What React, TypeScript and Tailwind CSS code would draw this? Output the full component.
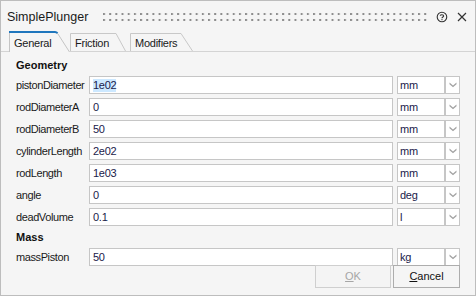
import React from "react";

const FONT = { fontFamily: '"Liberation Sans", Arial, sans-serif' };

function Chevron() {
  return (
    <svg width="8" height="6" viewBox="0 0 8 6">
      <path d="M0.5 0.5 L4 3.5 L7.5 0.5 L7.5 2.2 L4 5.3 L0.5 2.2 Z" fill="#a3a3a3" />
    </svg>
  );
}

function Row({ label, value, unit, selected }: { label: string; value: string; unit: string; selected?: boolean }) {
  return (
    <div className="flex h-[18px] items-center">
      <div className="w-[73px] text-[11px] tracking-[-0.4px] text-[#1a1a1a] leading-none">{label}</div>
      <div className="w-[304px] h-[18px] border border-[#c6c6c6] bg-white flex items-center pl-[3px] text-[11px] tracking-[-0.25px] text-[#1a1a4a] leading-none">
        {selected ? <span className="bg-[#cce8ff] py-[1px]">{value}</span> : <span>{value}</span>}
      </div>
      <div className="ml-[4px] w-[48px] h-[18px] border border-[#c6c6c6] bg-white flex items-center pl-[2px] text-[11px] tracking-[-0.25px] text-[#1a1a4a] leading-none">
        {unit}
      </div>
      <div className="w-[15px] h-[18px] border border-[#c6c6c6] bg-white flex items-center justify-center">
        <Chevron />
      </div>
    </div>
  );
}

function Heading({ children }: { children: React.ReactNode }) {
  return <div className="h-[22px] flex items-center text-[11px] font-bold text-[#111] leading-none">{children}</div>;
}

export default function App() {
  return (
    <div style={FONT} className="w-[476px] h-[296px] border border-[#bdbdbd] bg-[#f5f5f5] flex flex-col overflow-hidden">
      {/* title bar */}
      <div className="h-[30px] flex items-center pl-[6px] pr-[8px]">
        <span className="text-[12.5px] text-[#1a1a1a] leading-none mt-[2px]">SimplePlunger</span>
        <svg className="ml-[15px] mt-[2px]" width="328" height="8" viewBox="0 0 328 8">
          <defs>
            <pattern id="dots" x="0" y="0" width="6.2" height="6" patternUnits="userSpaceOnUse">
              <rect x="0" y="0" width="2" height="2" fill="#8c8c8c" />
            </pattern>
          </defs>
          <rect x="0" y="0" width="328" height="8" fill="url(#dots)" />
        </svg>
        <svg className="ml-[6px] mt-[1px]" width="12" height="12" viewBox="0 0 12 12">
          <circle cx="6" cy="6" r="4.8" fill="none" stroke="#333" strokeWidth="1.1" />
          <path d="M4.3 4.8 C4.3 3.4 7.7 3.4 7.7 4.9 C7.7 6 6 6 6 7.3" fill="none" stroke="#333" strokeWidth="1.1" />
          <rect x="5.45" y="8.1" width="1.1" height="1.1" fill="#333" />
        </svg>
        <svg className="ml-[9px] mt-[1px]" width="10" height="10" viewBox="0 0 10 10">
          <path d="M1 1 L9 9 M9 1 L1 9" stroke="#333" strokeWidth="1.2" />
        </svg>
      </div>

      {/* tabs */}
      <div className="h-[21px] border-b border-[#d4d4d4] flex items-end pl-[8px]">
        <div className="relative w-[61px] h-[21px] -mb-px bg-[#f5f5f5]">
          <svg className="absolute inset-0" width="61" height="21" viewBox="0 0 61 21">
            <path d="M0.5 21 V1.5" stroke="#c4c4c4" />
            <path d="M46 1.2 Q48 1.5 49 3 L60.5 21" fill="none" stroke="#c4c4c4" />
            <path d="M0 1 H46 Q47.5 1 48.5 2.2" fill="none" stroke="#1f76bd" strokeWidth="2" />
          </svg>
          <span className="absolute left-[5px] top-[7px] text-[11px] tracking-[-0.25px] text-[#1a1a1a] leading-none">General</span>
        </div>
        <div className="relative w-[56px] h-[18px]">
          <svg className="absolute inset-0" width="56" height="18" viewBox="0 0 56 18">
            <path d="M0.5 18 V0.5 H46 L55.5 18" fill="none" stroke="#c8c8c8" />
          </svg>
          <span className="absolute left-[5px] top-[5px] text-[11px] tracking-[-0.25px] text-[#1a1a1a] leading-none">Friction</span>
        </div>
        <div className="relative ml-[4px] w-[63px] h-[18px]">
          <svg className="absolute inset-0" width="63" height="18" viewBox="0 0 63 18">
            <path d="M0.5 18 V0.5 H51 L62.5 18" fill="none" stroke="#c8c8c8" />
          </svg>
          <span className="absolute left-[5px] top-[5px] text-[11px] tracking-[-0.25px] text-[#1a1a1a] leading-none">Modifiers</span>
        </div>
      </div>

      {/* content */}
      <div className="pl-[15px] mt-[2px] flex flex-col">
        <Heading>Geometry</Heading>
        <div className="flex flex-col gap-[4px]">
          <Row label="pistonDiameter" value="1e02" unit="mm" selected />
          <Row label="rodDiameterA" value="0" unit="mm" />
          <Row label="rodDiameterB" value="50" unit="mm" />
          <Row label="cylinderLength" value="2e02" unit="mm" />
          <Row label="rodLength" value="1e03" unit="mm" />
          <Row label="angle" value="0" unit="deg" />
          <Row label="deadVolume" value="0.1" unit="l" />
        </div>
        <Heading>Mass</Heading>
        <Row label="massPiston" value="50" unit="kg" />
      </div>

      {/* buttons */}
      <div className="flex justify-end pr-[15px] mt-[-1px] gap-[2px]">
        <div className="w-[76px] h-[23px] border border-[#cfcfcf] bg-[#f4f4f4] flex items-center justify-center text-[11px] text-[#a6a6a6] leading-none">
          <span><span className="underline">O</span>K</span>
        </div>
        <div className="w-[67px] h-[23px] border border-[#adadad] bg-[#f5f5f5] flex items-center justify-center text-[11px] text-[#111] leading-none">
          <span><span className="underline">C</span>ancel</span>
        </div>
      </div>
    </div>
  );
}
